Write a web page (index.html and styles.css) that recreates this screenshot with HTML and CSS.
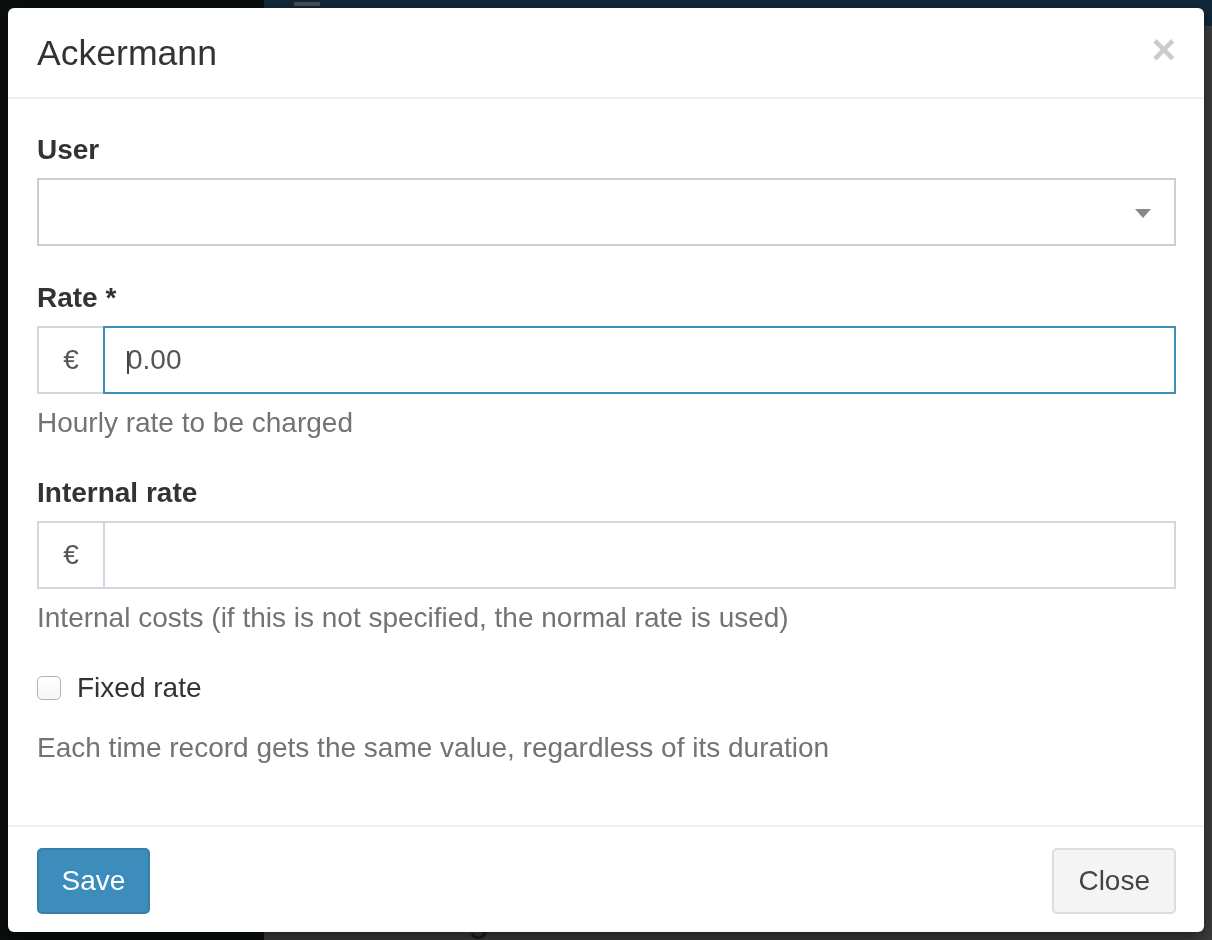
FILE: index.html
```html
<!DOCTYPE html>
<html lang="en">
<head>
<meta charset="utf-8">
<title>Ackermann</title>
<link rel="stylesheet" href="styles.css">
</head>
<body>
<div class="page">
  <aside class="sidebar"></aside>
  <main class="main">
    <header class="topbar"><span class="burger"></span></header>
    <section class="content"><h2 class="content-title">Time budget</h2></section>
  </main>
</div>

<div class="overlay">
  <div class="modal">
    <div class="modal-header">
      <h4 class="modal-title">Ackermann</h4>
      <button class="close" type="button" aria-label="Close">×</button>
    </div>

    <form class="modal-body">
      <div class="form-group group-select">
        <label class="control-label">User</label>
        <div class="select"><span class="select-arrow"></span></div>
      </div>

      <div class="form-group">
        <label class="control-label">Rate *</label>
        <div class="input-group">
          <span class="addon">€</span>
          <span class="input-wrap">
            <input class="form-control focused" type="text" value="0.00">
            <span class="caret"></span>
          </span>
        </div>
        <p class="help">Hourly rate to be charged</p>
      </div>

      <div class="form-group">
        <label class="control-label">Internal rate</label>
        <div class="input-group">
          <span class="addon">€</span>
          <span class="input-wrap">
            <input class="form-control" type="text" value="">
          </span>
        </div>
        <p class="help">Internal costs (if this is not specified, the normal rate is used)</p>
      </div>

      <div class="form-group">
        <label class="checkbox-row">
          <input class="checkbox" type="checkbox">
          <span>Fixed rate</span>
        </label>
        <p class="help help-check">Each time record gets the same value, regardless of its duration</p>
      </div>
    </form>

    <div class="modal-footer">
      <button class="btn btn-primary" type="button">Save</button>
      <button class="btn btn-default" type="button">Close</button>
    </div>
  </div>
</div>
</body>
</html>
```

FILE: styles.css
```css
* {
  box-sizing: border-box;
}

html,
body {
  margin: 0;
  height: 100%;
}

body {
  font-family: "Liberation Sans", Arial, sans-serif;
  background: #3d3d3d;
  overflow: hidden;
}

/* ---------- page behind the overlay ---------- */
.page {
  display: flex;
  height: 940px;
}

.sidebar {
  width: 264px;
  flex: none;
  background: #0b0e0f;
}

.main {
  flex: 1;
  display: flex;
  flex-direction: column;
  background: #3d3d3d;
}

.topbar {
  height: 48px;
  background: #12283a;
  padding-left: 30px;
}

.burger {
  display: block;
  width: 26px;
  height: 4px;
  margin-top: 2px;
  background: #4b5056;
}

.content {
  flex: 1;
  padding: 872px 0 0 56px;
}

.content-title {
  margin: 0;
  font-size: 36px;
  font-weight: normal;
  color: #1c1c1c;
}

/* ---------- modal ---------- */
.overlay {
  position: fixed;
  inset: 0;
  padding: 8px;
}

.modal {
  height: 924px;
  display: flex;
  flex-direction: column;
  background: #fff;
  border-radius: 6px;
  box-shadow: 0 5px 15px rgba(0, 0, 0, 0.5);
}

.modal-header {
  display: flex;
  justify-content: space-between;
  align-items: flex-start;
  padding: 30px 28px 28px 29px;
  border-bottom: 2px solid #efefef;
}

.modal-title {
  margin: 0;
  font-size: 35.6px;
  line-height: 31px;
  font-weight: normal;
  color: #333;
}

.close {
  margin: -9px 0 -2px;
  padding: 0;
  border: 0;
  background: none;
  font-family: "Liberation Sans", Arial, sans-serif;
  font-size: 42px;
  font-weight: bold;
  line-height: 1;
  color: #000;
  opacity: 0.2;
  text-shadow: 0 1px 0 #fff;
  cursor: pointer;
}

.modal-body {
  flex: 1;
  margin: 0;
  padding: 31px 28px 0 29px;
}

.form-group {
  margin-bottom: 30px;
}

.group-select {
  margin-bottom: 32px;
}

.control-label {
  display: block;
  margin-bottom: 8px;
  font-size: 28px;
  line-height: 40px;
  font-weight: bold;
  color: #333;
}

.select {
  position: relative;
  height: 68px;
  border: 2px solid #cdcdcd;
  background: #fff;
}

.select-arrow {
  position: absolute;
  right: 23px;
  top: 29px;
  width: 0;
  height: 0;
  border-style: solid;
  border-width: 9px 8px 0 8px;
  border-color: #888 transparent transparent transparent;
}

.input-group {
  display: flex;
  height: 68px;
}

.addon {
  width: 66px;
  flex: none;
  display: flex;
  align-items: center;
  justify-content: center;
  border: 2px solid #d2d6de;
  border-right: 0;
  font-size: 28px;
  color: #555;
  background: #fff;
}

.input-wrap {
  position: relative;
  flex: 1;
  display: flex;
}

.form-control {
  flex: 1;
  width: 100%;
  height: 68px;
  margin: 0;
  padding: 0 22px;
  border: 2px solid #d2d6de;
  border-radius: 0;
  outline: none;
  font-family: "Liberation Sans", Arial, sans-serif;
  font-size: 28px;
  color: #555;
  background: #fff;
}

.form-control.focused {
  border-color: #3c8dbc;
}

.caret {
  position: absolute;
  left: 24px;
  top: 25px;
  width: 2px;
  height: 23px;
  background: #444;
}

.help {
  margin: 9px 0 0;
  font-size: 28px;
  line-height: 40px;
  color: #737373;
}

.checkbox-row {
  display: flex;
  align-items: center;
  height: 40px;
  font-size: 28px;
  color: #333;
}

.checkbox {
  appearance: none;
  -webkit-appearance: none;
  width: 24px;
  height: 24px;
  margin: 0 16px 0 0;
  border: 1px solid #b3b3b3;
  border-radius: 5px;
  background: linear-gradient(#fff, #f6f6f6);
}

.help-check {
  margin-top: 20px;
}

.modal-footer {
  display: flex;
  justify-content: space-between;
  align-items: flex-start;
  padding: 21px 28px 0 29px;
  height: 107px;
  border-top: 2px solid #f0f0f0;
}

.btn {
  height: 66px;
  padding: 0 23px;
  border: 2px solid transparent;
  border-radius: 5px;
  font-family: "Liberation Sans", Arial, sans-serif;
  font-size: 28px;
  line-height: 1;
  cursor: pointer;
}

.btn-primary {
  padding: 0 22.5px;
  background: #3c8dbc;
  border-color: #367fa9;
  color: #fff;
}

.btn-default {
  padding: 0 24px;
  background: #f4f4f4;
  border-color: #dddddd;
  color: #444;
}
```
